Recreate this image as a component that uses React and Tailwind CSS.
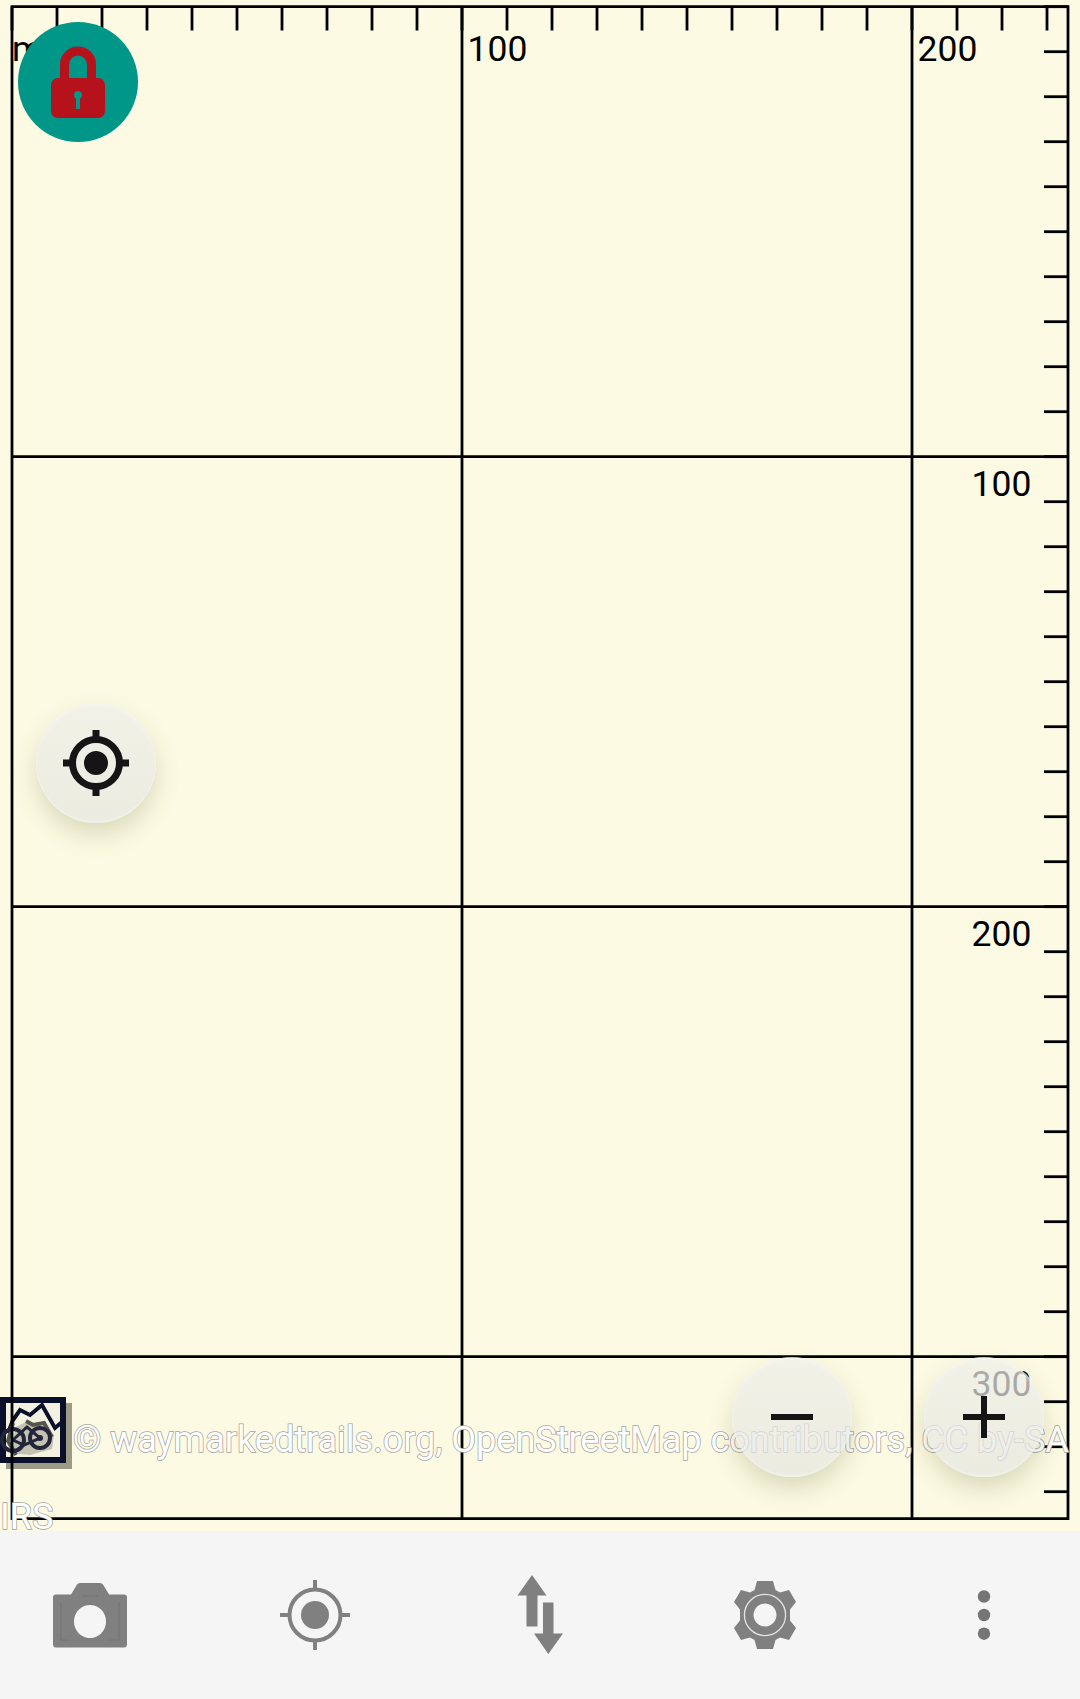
const ROBOTO = { fontFamily: 'Roboto, sans-serif' };

const xs = Array.from({ length: 24 }, (_, i) => 12 + 45 * i);
const ys = Array.from({ length: 34 }, (_, i) => 6.7 + 45 * i).filter((y) => y < 1510);

// the metric scale, drawn like a chart over the map
function ScaleGrid() {
  return (
    <svg className="absolute inset-0" width="1080" height="1531" style={ROBOTO}>
      <g stroke="#000" strokeWidth="2.8" fill="none">
        <path d="M12 6.700H1068V1518.700H12Z" />
        <path d="M462 6.700V1518.700M912 6.700V1518.700M12 456.700H1068M12 906.700H1068M12 1356.700H1068" />
        {xs.map((x) => <path key={x} d={`M${x} 6.700V30.500`} />)}
        {ys.map((y) => <path key={y} d={`M1044 ${y}H1068`} />)}
      </g>
      <g fontSize="35.500" fill="#000">
        <text x="12" y="61">m</text>
        <text x="467.500" y="61">100</text>
        <text x="917.500" y="61">200</text>
        <text x="971.500" y="496">100</text>
        <text x="971.500" y="946">200</text>
        <text x="971.500" y="1396">300</text>
      </g>
    </svg>
  );
}

function TrailLogo() {
  return (
    <svg className="absolute left-0 top-[1397px]" width="74" height="74" viewBox="0 0 74 74" fill="none">
      <rect x="6" y="6" width="66" height="66" fill="#9c9b86" />
      <rect x="3" y="3" width="60" height="60" fill="#f3f2e0" stroke="#0a0f2a" strokeWidth="6" />
      <path d="M16 30 28 24 40 28 54 38 52 52 30 58 10 56Z" fill="#c4c3b2" />
      <path d="M8 36 13 23 20 13 30 18 42 8 55 31 62 25" stroke="#0a0f2a" strokeWidth="4" />
      <path d="M13 26 8 44 16 58M26 24 33 28 44 26 52 40" stroke="#55554c" strokeWidth="4" />
      <circle cx="40" cy="41" r="10" stroke="#23263a" strokeWidth="4" />
      <circle cx="40" cy="41" r="3" fill="#23263a" />
      <circle cx="13" cy="43" r="11" stroke="#23263a" strokeWidth="4" />
      <path d="M13 43 27 30 40 41 24 48Z" stroke="#23263a" strokeWidth="3" />
    </svg>
  );
}

function LockButton() {
  return (
    <div className="absolute left-[18px] top-[22px] w-[120px] h-[120px] rounded-full bg-[#009688]">
      <svg width="120" height="120" viewBox="0 0 120 120">
        <path d="M46.500 60V42.500a13.500 13.500 0 0 1 27 0V60" fill="none" stroke="#b5121b" strokeWidth="9" />
        <rect x="33" y="56" width="54" height="40" rx="7" fill="#b5121b" />
        <circle cx="60" cy="73" r="4" fill="#009688" />
        <rect x="58" y="73" width="4" height="14" fill="#009688" />
      </svg>
    </div>
  );
}

function FloatButton({ className, children }) {
  return (
    <div className={`absolute w-[120px] h-[120px] rounded-full flex items-center justify-center bg-gradient-to-b from-[rgba(238,238,233,0.72)] to-[rgba(228,228,224,0.68)] shadow-[0_12px_24px_rgba(90,90,40,0.2),inset_0_3px_4px_rgba(255,255,255,0.35),inset_0_-2px_2px_rgba(255,255,255,0.3)] ${className}`}>
      {children}
    </div>
  );
}

function CameraIcon() {
  return (
    <svg width="80" height="80" viewBox="0 0 80 80">
      <path
        fillRule="evenodd"
        fill="#808080"
        d="M6 12.500H21L27 2.500Q28 1 30 1H50Q52 1 53 2.500L59 12.500H74Q77 12.500 77 15.500V62Q77 65.500 74 65.500H6Q3 65.500 3 62V15.500Q3 12.500 6 12.500ZM40 23a16 16.500 0 1 0 .01 0Z"
        transform="translate(0 7)"
      />
      <path d="M11 20V58H20M69 20V58H60M32 14H48" transform="translate(0 7)" stroke="#747474" strokeWidth="1" fill="none" />
    </svg>
  );
}

function TargetIcon() {
  return (
    <svg width="80" height="80" viewBox="0 0 80 80" fill="none">
      <circle cx="40" cy="40" r="25.500" stroke="#808080" strokeWidth="4" />
      <circle cx="40" cy="40" r="14" fill="#808080" />
      <path d="M40 5V15M40 65V75M5 40H15M65 40H75" stroke="#808080" strokeWidth="4" />
    </svg>
  );
}

function ArrowsIcon() {
  return (
    <svg width="80" height="80" viewBox="0 0 80 80" fill="#808080">
      <path d="M32 0 46.500 20.500H37.500V51.500H26.500V20.500H17.500Z" />
      <path d="M43 27.500H53.500V58.500H63L48.300 79 34 58.500H43Z" />
    </svg>
  );
}

function GearIcon() {
  return (
    <svg width="80" height="80" viewBox="0 0 80 80">
      <path
        fill="#808080"
        fillRule="evenodd"
        d="M32 6H48L50.500 15 55 17.500 64 15 71 27 65 34.500V45.500L71 53 64 65 55 62.500 50.500 65 48 74H32L29.500 65 25 62.500 16 65 9 53 15 45.500V34.500L9 27 16 15 25 17.500 29.500 15ZM40 28.500a11.500 11.500 0 1 0 .01 0Z"
      />
      <circle cx="40" cy="40" r="20.600" fill="none" stroke="#e4e4e4" strokeWidth="1.300" />
    </svg>
  );
}

function MoreIcon() {
  return (
    <svg width="80" height="80" viewBox="0 0 80 80" fill="#757575">
      <circle cx="40" cy="21.500" r="6.200" />
      <circle cx="40" cy="40" r="6.200" />
      <circle cx="40" cy="58.700" r="6.200" />
    </svg>
  );
}

export default function App() {
  return (
    <div className="w-[1080px] h-[1699px] overflow-hidden flex flex-col bg-[#f5f5f5]">
      <div className="relative h-[1531px] shrink-0 overflow-hidden bg-[#fcfae2]" style={ROBOTO}>
        <TrailLogo />
        <ScaleGrid />

        <div className="absolute left-[73px] top-[1419px] whitespace-nowrap text-[36px] leading-[42px] text-white [-webkit-text-stroke:1.5px_#a3a3a0] [paint-order:stroke_fill]">
          © waymarkedtrails.org, OpenStreetMap contributors, CC by-SA
        </div>
        <div className="absolute left-0 top-[1496px] text-[36px] leading-[42px] text-white [-webkit-text-stroke:1.5px_#a3a3a0] [paint-order:stroke_fill]">
          IRS
        </div>

        <LockButton />

        <FloatButton className="left-[36px] top-[703px]">
          <svg width="80" height="80" viewBox="0 0 80 80" fill="none">
            <circle cx="40" cy="40" r="23.500" stroke="#151515" strokeWidth="7" />
            <circle cx="40" cy="40" r="12" fill="#151515" />
            <path d="M40 7V20M40 60V73M7 40H20M60 40H73" stroke="#151515" strokeWidth="7" />
          </svg>
        </FloatButton>
        <FloatButton className="left-[732px] top-[1357px]">
          <div className="w-[42px] h-[6px] bg-[#151515]" />
        </FloatButton>
        <FloatButton className="left-[924px] top-[1357px]">
          <svg width="42" height="42" viewBox="0 0 42 42" fill="#151515">
            <rect y="18" width="42" height="6" />
            <rect x="18" width="6" height="42" />
          </svg>
        </FloatButton>
      </div>

      <div className="flex-1 flex items-start gap-[145px] pl-[50px] pt-[44px]">
        <CameraIcon />
        <TargetIcon />
        <ArrowsIcon />
        <GearIcon />
        <div className="-ml-[6px]">
          <MoreIcon />
        </div>
      </div>
    </div>
  );
}
